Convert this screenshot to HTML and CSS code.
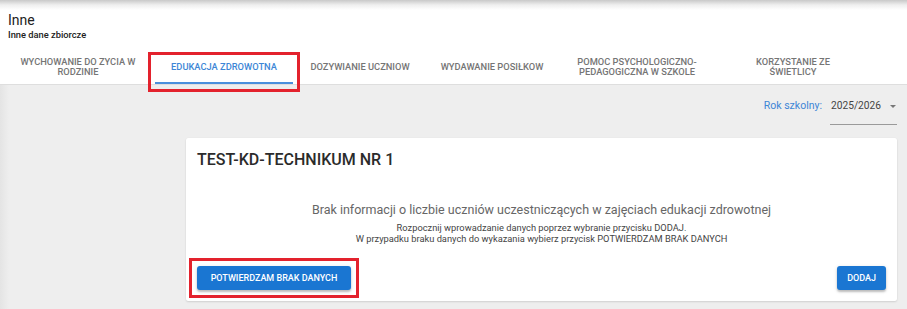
FILE: index.html
```html
<!DOCTYPE html>
<html lang="pl">
<head>
<meta charset="utf-8">
<title>Inne</title>
<link rel="stylesheet" href="styles.css">
</head>
<body>
<header class="header">
  <h1 class="title">Inne</h1>
  <div class="subtitle">Inne dane zbiorcze</div>
  <nav class="tabs">
    <div class="tab">Wychowanie do zycia w<br>rodzinie</div>
    <div class="tab tab-active">Edukacja zdrowotna</div>
    <div class="tab">Dozywianie uczniow</div>
    <div class="tab">Wydawanie posiłkow</div>
    <div class="tab">Pomoc psychologiczno-<br>pedagogiczna w szkole</div>
    <div class="tab">Korzystanie ze<br>świetlicy</div>
  </nav>
</header>
<main class="main">
  <div class="year-row">
    <span class="year-label">Rok szkolny:</span>
    <div class="year-select">
      <span class="year-value">2025/2026</span>
      <span class="year-arrow"></span>
    </div>
  </div>
  <section class="card">
    <h2 class="card-title">TEST-KD-TECHNIKUM NR 1</h2>
    <p class="empty-title">Brak informacji o liczbie uczniów uczestniczących w zajęciach edukacji zdrowotnej</p>
    <p class="empty-text">Rozpocznij wprowadzanie danych poprzez wybranie przycisku DODAJ.<br>W przypadku braku danych do wykazania wybierz przycisk POTWIERDZAM BRAK DANYCH</p>
    <div class="actions">
      <button class="btn btn-marked">Potwierdzam brak danych</button>
      <button class="btn">Dodaj</button>
    </div>
  </section>
</main>
</body>
</html>
```
FILE: styles.css
```css
* { box-sizing: border-box; }
html, body { margin: 0; padding: 0; }
body {
  font-family: Roboto, "Noto Sans", sans-serif;
  background: #eeeeee;
  width: 907px;
  height: 309px;
  overflow: hidden;
}
.header {
  background: linear-gradient(to bottom, #c9c9c9 0, #efefef 5px, #ffffff 10px);
  padding: 11px 8px 0;
  border-bottom: 1px solid #dedede;
}
.title {
  margin: 0;
  font-size: 14px;
  line-height: 18px;
  font-weight: 400;
  color: #222;
}
.subtitle {
  font-size: 9.3px;
  line-height: 12px;
  font-weight: 500;
  color: #222;
}
.tabs {
  display: grid;
  grid-template-columns: 140px 152px 120px 144px 146px 166px;
  height: 34px;
  margin-top: 9px;
}
.tab {
  position: relative;
  display: flex;
  align-items: center;
  justify-content: center;
  text-align: center;
  text-transform: uppercase;
  font-size: 9.3px;
  line-height: 9.5px;
  font-weight: 500;
  color: #757575;
  padding-bottom: 1px;
}
.tab-active {
  color: #3d86d6;
}
.tab-active::before {
  content: "";
  position: absolute;
  left: 7px;
  right: 7px;
  bottom: 0;
  height: 2px;
  background: #4a8fdc;
}
.tab-active::after {
  content: "";
  position: absolute;
  left: 0;
  right: 0;
  top: 2px;
  bottom: -8px;
  border: 3px solid #e3222d;
}
.main {
  background: linear-gradient(to right, #e4e4e4 0, #eeeeee 9px);
  padding: 10px 10px 0 186px;
  height: 225px;
}
.year-row {
  display: flex;
  justify-content: flex-end;
  align-items: flex-start;
  gap: 8px;
}
.year-label {
  padding-top: 4px;
  font-size: 10.5px;
  line-height: 14px;
  color: #3d86d6;
}
.year-select {
  width: 67px;
  display: flex;
  justify-content: space-between;
  padding: 4px 1px 11px 1px;
  border-bottom: 1px solid #9a9a9a;
}
.year-value {
  font-size: 10.2px;
  line-height: 14px;
  color: #444;
}
.year-arrow {
  width: 0;
  height: 0;
  margin-top: 6px;
  border-left: 3.5px solid transparent;
  border-right: 3.5px solid transparent;
  border-top: 3.5px solid #777;
}
.card {
  margin-top: 13px;
  background: #fff;
  border-radius: 2px;
  box-shadow: 0 1px 2px rgba(0,0,0,0.12), 0 0 1px rgba(0,0,0,0.08);
  padding: 12px 11px 10px;
  height: 163px;
}
.card-title {
  margin: 0;
  font-size: 16px;
  line-height: 20px;
  font-weight: 500;
  color: #2b2b2b;
}
.empty-title {
  margin: 32px 0 0;
  text-align: center;
  font-size: 12.5px;
  line-height: 16px;
  color: #666;
}
.empty-text {
  margin: 4px 0 0;
  text-align: center;
  font-size: 9.3px;
  line-height: 11px;
  color: #444;
}
.actions {
  display: flex;
  justify-content: space-between;
  margin-top: 22px;
}
.btn {
  height: 24px;
  border: 0;
  border-radius: 3px;
  background: #1a76d2;
  color: #fff;
  font-family: Roboto, "Noto Sans", sans-serif;
  font-size: 9px;
  font-weight: 500;
  text-transform: uppercase;
  padding: 0 10px;
  box-shadow: 0 2px 2px rgba(0,0,0,0.2), 0 1px 4px rgba(0,0,0,0.12);
}
.btn-marked {
  position: relative;
  width: 154px;
}
.btn-marked::after {
  content: "";
  position: absolute;
  left: -8px;
  right: -8px;
  top: -8px;
  bottom: -8px;
  border: 3px solid #e3222d;
}
```
